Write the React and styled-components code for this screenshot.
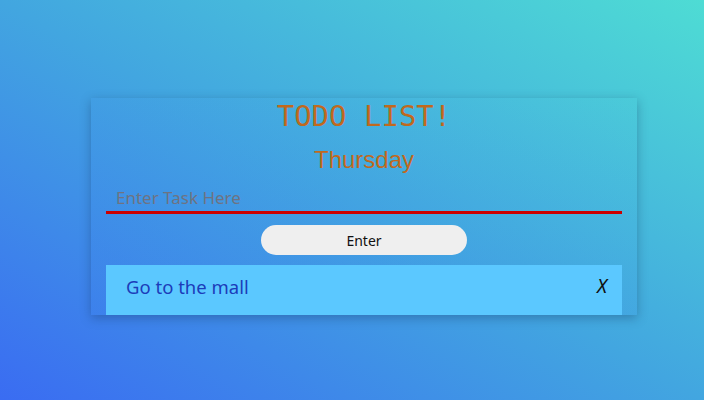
import React from "react";
import styled, { createGlobalStyle } from "styled-components";

const Global = createGlobalStyle`
  html, body { margin: 0; padding: 0; }
  body {
    width: 704px;
    height: 400px;
    overflow: hidden;
    background: linear-gradient(to top right, #3a6cf2 0%, #42a6e0 50%, #4edcd4 100%);
    font-family: "Noto Sans", "Open Sans", sans-serif;
  }
`;

const Page = styled.div`
  width: 704px;
  height: 400px;
  box-sizing: border-box;
  padding: 98px 67px 0 91px;
`;

const Card = styled.div`
  box-sizing: border-box;
  height: 217px;
  padding: 0 15px;
  display: flex;
  flex-direction: column;
  align-items: stretch;
  background: linear-gradient(to top right, rgba(60, 130, 235, 0.35), rgba(80, 210, 220, 0.15));
  box-shadow: 0 3px 10px rgba(20, 50, 90, 0.35);
`;

const Title = styled.h1`
  margin: 0;
  height: 36px;
  line-height: 36px;
  text-align: center;
  font-family: "DejaVu Sans Mono", "Liberation Mono", monospace;
  font-weight: normal;
  font-size: 29px;
  color: #c0691e;
`;

const Day = styled.h2`
  margin: 12px 0 0;
  height: 28px;
  line-height: 28px;
  text-align: center;
  font-family: "Liberation Sans", Arial, sans-serif;
  font-weight: normal;
  font-size: 24px;
  color: #c0691e;
`;

const Input = styled.input`
  margin-top: 10px;
  box-sizing: border-box;
  height: 30px;
  width: 100%;
  padding: 0 10px;
  border: none;
  border-bottom: 3px solid #cc0000;
  background: transparent;
  outline: none;
  font-family: "Noto Sans", sans-serif;
  font-size: 17px;
  color: #333;
  &::placeholder { color: #6e7382; }
`;

const ButtonRow = styled.div`
  display: flex;
  justify-content: center;
  margin-top: 11px;
`;

const Button = styled.button`
  width: 206px;
  height: 30px;
  border: none;
  border-radius: 15px;
  background: #efefef;
  color: #111;
  font-family: "Noto Sans", sans-serif;
  font-size: 14px;
  padding: 0;
  cursor: pointer;
`;

const Item = styled.div`
  margin-top: 10px;
  flex: 1;
  display: flex;
  align-items: center;
  justify-content: space-between;
  padding: 0 15px 8px 20px;
  background: #5bc8ff;
`;

const ItemText = styled.span`
  font-family: "Noto Sans", sans-serif;
  font-size: 18.5px;
  color: #1c3cba;
`;

const Remove = styled.span`
  font-family: "Noto Sans", sans-serif;
  font-style: italic;
  font-size: 19px;
  color: #111;
  cursor: pointer;
`;

export default function App() {
  return (
    <>
      <Global />
      <Page>
        <Card>
          <Title>TODO LIST!</Title>
          <Day>Thursday</Day>
          <Input placeholder="Enter Task Here" />
          <ButtonRow>
            <Button>Enter</Button>
          </ButtonRow>
          <Item>
            <ItemText>Go to the mall</ItemText>
            <Remove>X</Remove>
          </Item>
        </Card>
      </Page>
    </>
  );
}
